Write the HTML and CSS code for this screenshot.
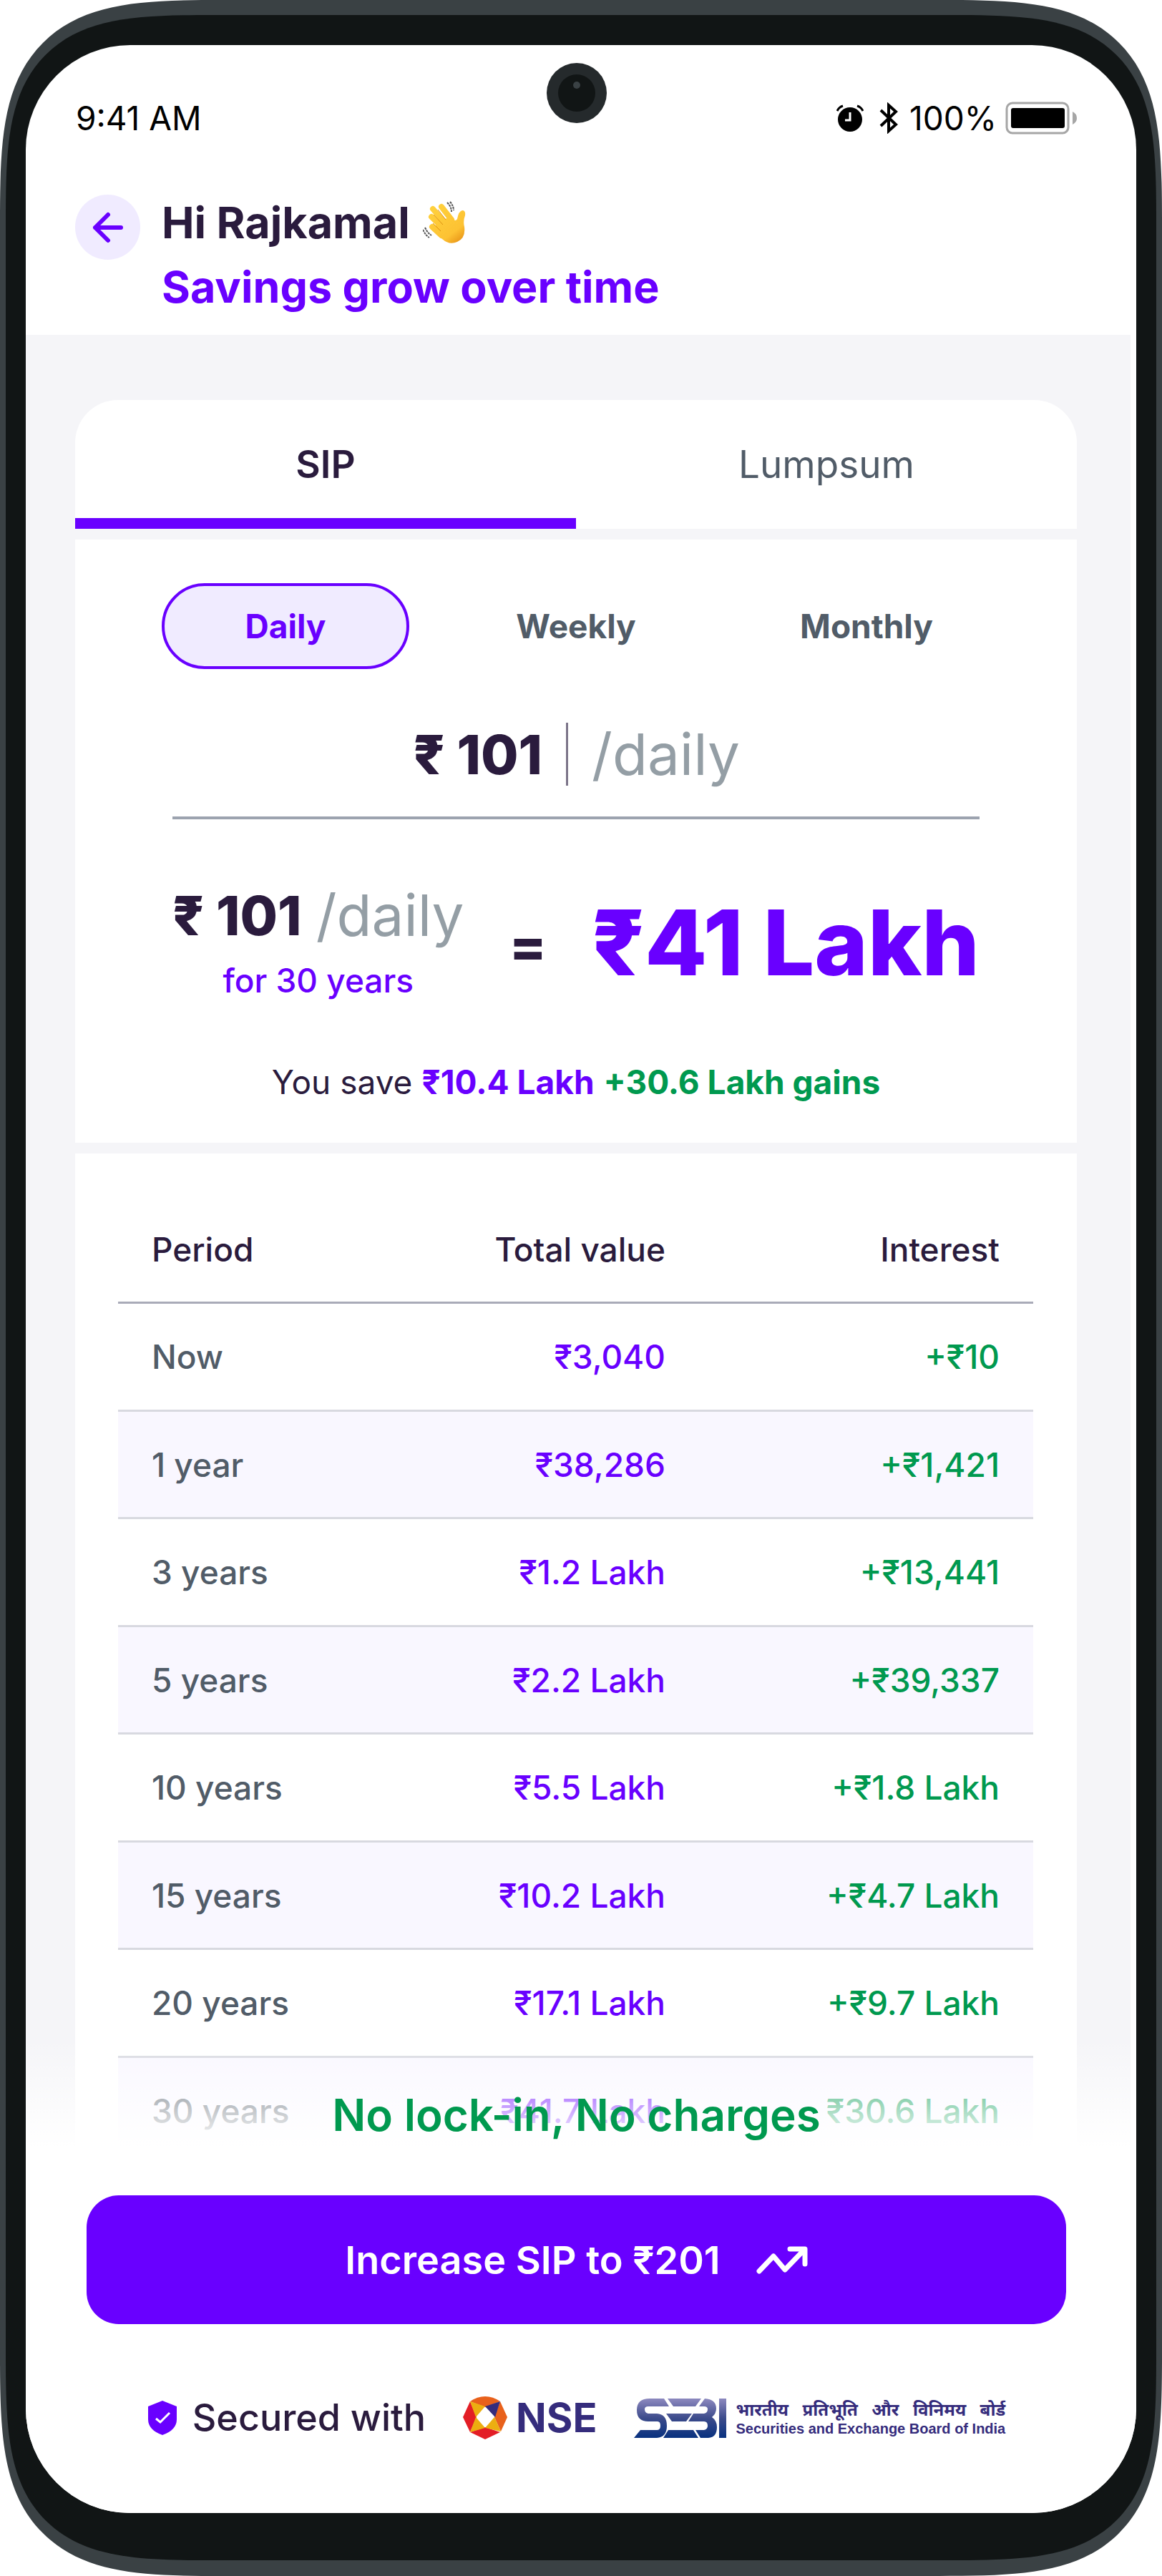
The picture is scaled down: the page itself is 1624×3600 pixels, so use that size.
FILE: index.html
```html
<!DOCTYPE html>
<html lang="en">
<head>
<meta charset="utf-8">
<meta name="viewport" content="width=device-width, initial-scale=1">
<title>Savings grow over time</title>
<link rel="stylesheet" href="styles.css">
</head>
<body>
<div class="phone">
  <div class="bezel">
    <div class="screen">
      <svg class="camera" viewBox="0 0 84 84" aria-hidden="true"><circle cx="42" cy="42" r="42" fill="#252a2c"/><circle cx="42" cy="42" r="26" fill="#111515"/><circle cx="42" cy="31" r="5" fill="#3a4144"/></svg>

      <div class="status">
        <span>9:41 AM</span>
        <div class="status-icons">
          <svg width="38" height="38" viewBox="0 0 38 38" aria-hidden="true"><circle cx="19" cy="21" r="17"/><path d="M1 9a13 13 0 0 1 8-7M29 2a13 13 0 0 1 8 7" fill="none" stroke="#000" stroke-width="3"/><path d="M19 11v11h-7" fill="none" stroke="#fff" stroke-width="3"/></svg>
          <svg class="bluetooth" width="26" height="44" viewBox="0 0 26 44" aria-hidden="true"><path d="M2 11l21 20-10 9V4l10 9L2 33" fill="none" stroke="#000" stroke-width="4"/></svg>
          <span>100%</span>
          <svg class="battery" width="100" height="46" viewBox="0 0 100 46" aria-hidden="true"><rect x="2" y="2" width="86" height="42" rx="8" fill="none" stroke="#a6a6a6" stroke-width="3"/><rect x="8" y="9" width="75" height="28" rx="3"/><path d="M94 14q6 3 6 9t-6 9z" fill="#a6a6a6"/></svg>
        </div>
      </div>

      <header class="header">
        <button class="back" type="button" aria-label="Back">
          <svg width="44" height="44" viewBox="0 0 44 44" aria-hidden="true"><path d="M40 22H4M22 4L4 22l18 18" fill="none" stroke="#6900ff" stroke-width="6" stroke-linecap="round" stroke-linejoin="round"/></svg>
        </button>
        <h1 class="title">
          <span class="greeting">Hi Rajkamal
            <svg class="wave" width="60" height="60" viewBox="0 0 60 60" aria-hidden="true">
              <defs><linearGradient id="skin" gradientUnits="userSpaceOnUse" x1="10" y1="5" x2="52" y2="58"><stop offset="0" stop-color="#ffd23d"/><stop offset=".75" stop-color="#fdc233"/><stop offset="1" stop-color="#e89417"/></linearGradient></defs>
              <g stroke="url(#skin)" stroke-width="8" stroke-linecap="round" fill="none"><path d="M14 11l18 21M26 8l14 18M12 22l18 18M13 36l13 12"/></g>
              <path d="M20 30L38 22Q45 30 48 25Q50 14 55 13Q60 13 59 20Q56 28 58 36Q60 52 48 57Q37 62 27 53L15 41Z" fill="url(#skin)"/>
              <path d="M21 12l11 14M15 19l13 14M14 31l11 11" fill="none" stroke="#dd9012" stroke-width="1"/>
              <path d="M34 2q6 6 6 13M38 1q5 6 5 12M0 40q4 8 9 11M3 37q3 7 9 11" fill="none" stroke="#555" stroke-width="2" stroke-dasharray="3 1"/>
            </svg>
          </span>
          <span class="headline">Savings grow over time</span>
        </h1>
      </header>

      <main class="main">
        <div class="tabs" role="tablist">
          <button class="tab tab-active" type="button" role="tab" aria-selected="true">SIP</button>
          <button class="tab" type="button" role="tab" aria-selected="false">Lumpsum</button>
        </div>

        <section class="panel plan">
          <div class="frequency">
            <button class="pill pill-active" type="button" aria-pressed="true">Daily</button>
            <button class="pill" type="button" aria-pressed="false">Weekly</button>
            <button class="pill" type="button" aria-pressed="false">Monthly</button>
          </div>
          <div class="entry">
            <input class="amount-input" type="text" value="₹ 101" aria-label="Amount">
            <span class="caret"></span>
            <span class="per">/daily</span>
          </div>
          <div class="result">
            <div class="invest">
              <div class="invest-amount"><b>₹ 101</b><span class="per">/daily</span></div>
              <div class="duration">for 30 years</div>
            </div>
            <span class="equals">=</span>
            <strong class="total">₹41 Lakh</strong>
          </div>
          <p class="summary">You save <b class="value">₹10.4 Lakh</b> <b class="gain">+30.6 Lakh gains</b></p>
        </section>

        <section class="panel growth">
          <table class="table">
            <thead><tr><th scope="col">Period</th><th scope="col">Total value</th><th scope="col">Interest</th></tr></thead>
            <tbody>
              <tr><td>Now</td><td>₹3,040</td><td>+₹10</td></tr>
              <tr><td>1 year</td><td>₹38,286</td><td>+₹1,421</td></tr>
              <tr><td>3 years</td><td>₹1.2 Lakh</td><td>+₹13,441</td></tr>
              <tr><td>5 years</td><td>₹2.2 Lakh</td><td>+₹39,337</td></tr>
              <tr><td>10 years</td><td>₹5.5 Lakh</td><td>+₹1.8 Lakh</td></tr>
              <tr><td>15 years</td><td>₹10.2 Lakh</td><td>+₹4.7 Lakh</td></tr>
              <tr><td>20 years</td><td>₹17.1 Lakh</td><td>+₹9.7 Lakh</td></tr>
              <tr><td>30 years</td><td>₹41.7 Lakh</td><td>₹30.6 Lakh</td></tr>
            </tbody>
          </table>
        </section>
      </main>

      <footer class="footer">
        <p class="promise">No lock-in, No charges</p>
        <button class="cta" type="button">
          Increase SIP to ₹201
          <svg width="72" height="44" viewBox="0 0 72 44" aria-hidden="true"><path d="M4 38L24 17l16 19L67 8M47 7h21v21" fill="none" stroke="#fff" stroke-width="7" stroke-linecap="round" stroke-linejoin="round"/></svg>
        </button>
        <div class="secured">
          <div class="secured-label">
            <svg width="42" height="48" viewBox="0 0 42 48" aria-hidden="true"><path d="M21 0l20 8v18q0 15-20 22Q1 41 1 26V8z" fill="#6900ff"/><path d="M12 25l6 5 13-13" fill="none" stroke="#fff" stroke-width="3"/></svg>
            <span>Secured with</span>
          </div>
          <div class="nse">
            <svg width="62" height="60" viewBox="0 0 62 60" aria-hidden="true"><path d="M31 0Q42 0 52 7L31 15 10 7Q20 0 31 0z" fill="#e8611c"/><path d="M52 7l10 22-9 20-9-20z" fill="#e8611c"/><path d="M10 7l9 22-9 21L0 29z" fill="#e31e26"/><path d="M10 50l21-7 21 7-21 10z" fill="#e31e26"/><path d="M10 7l21 7-13 15zM18 29l13 15-21 6zM31 44l13-15 9 20z" fill="#ecae10"/><path d="M52 7L31 14l14 15z" fill="#352c7c"/></svg>
            <span>NSE</span>
          </div>
          <div class="sebi">
            <svg width="130" height="55" viewBox="0 0 130 55" role="img" aria-label="SEBI"><defs><linearGradient id="steel" x1="0" y1="0" x2="0" y2="55" gradientUnits="userSpaceOnUse"><stop offset="0" stop-color="#8d89bf"/><stop offset=".5" stop-color="#3c4b8b"/><stop offset="1" stop-color="#08317f"/></linearGradient></defs><g fill="url(#steel)"><path d="M42 0H22Q4 0 4 16Q4 32 20 32H33Q37 32 37 38Q37 44 32 44H9L0 55H32Q46 54 46 38Q46 22 32 21H20Q15 20 15 15Q15 11 20 11H49z"/><path d="M47 0H94L86 11H55zM45 21H81L73 32H53zM48 44H83L90 55H41z"/><path d="M99 0Q115 1 115 14Q115 21 109 26Q116 31 116 40Q116 54 104 55H93L86 44H98Q103 43 103 38Q103 32 98 32H76L83 21H98Q103 20 103 15Q103 11 98 11H91zM119 0H129V55H119z"/></g></svg>
            <div class="sebi-name">
              <div class="sebi-hindi" lang="hi"><span>भारतीय</span> <span>प्रतिभूति</span> <span>और</span> <span>विनिमय</span> <span>बोर्ड</span></div>
              <div class="sebi-english">Securities and Exchange Board of India</div>
            </div>
          </div>
        </div>
      </footer>
    </div>
  </div>
</div>
</body>
</html>
```
FILE: styles.css
```css
* { box-sizing: border-box; }

body {
  margin: 0;
  background: #fff;
  color: #2a1b3d;
  font-family: Inter, "Noto Sans", sans-serif;
}

button, input { font: inherit; color: inherit; border: 0; background: none; padding: 0; margin: 0; }
h1, p { margin: 0; }
svg { flex: none; display: block; }

/* Device frame */
.phone {
  background: #3a4144;
  border-radius: 205px;
  padding: 21px 8px 22px;
}
.bezel {
  background: #111515;
  border-radius: 185px;
  padding: 42px 28px 66px;
}
@supports (corner-shape: superellipse(1.7)) {
  .phone { border-radius: 312px; corner-shape: superellipse(1.7); }
  .bezel { border-radius: 290px; corner-shape: superellipse(1.7); }
}
.screen {
  position: relative;
  overflow: hidden;
  background: #fff;
  border-radius: 146px;
}
.camera {
  position: absolute;
  top: 25px;
  left: calc(50% - 48px);
  width: 84px;
}

/* Status bar */
.status {
  display: flex;
  justify-content: space-between;
  align-items: center;
  padding: 72px 83px 0 70px;
  color: #000;
  font-size: 46px;
  line-height: 60px;
}
.status-icons { display: flex; align-items: center; }
.bluetooth { margin: 0 16px 0 22px; }
.battery { margin-left: 12px; }

/* Header */
.header {
  display: flex;
  gap: 30px;
  padding: 71px 83px 22px 69px;
}
.back {
  flex: none;
  display: grid;
  place-items: center;
  width: 91px;
  height: 91px;
  margin-top: 6px;
  border-radius: 50%;
  background: #f0ebff;
}
.title { font-size: 61px; line-height: 90px; font-weight: 700; }
.greeting { display: flex; align-items: center; gap: 18px; }
.headline { display: block; color: #6900ff; }

/* Content */
.main {
  margin-right: 8px;
  padding: 91px 75px 0 69px;
  background: #f5f5f8;
}
.tabs {
  display: flex;
  height: 180px;
  margin-bottom: 15px;
  border-radius: 60px 60px 0 0;
  overflow: hidden;
  background: #fff;
}
.tab {
  flex: 1;
  padding-top: 14px;
  border-bottom: 15px solid transparent;
  color: #515c68;
  font-size: 53px;
}
.tab-active { border-color: #6900ff; color: #2a1b3d; font-weight: 600; }
.panel { background: #fff; }
.plan { margin-bottom: 15px; padding: 61px 121px 55px; }
.frequency { display: flex; gap: 60px; }
.pill {
  flex: 1;
  height: 120px;
  border: 4px solid transparent;
  border-radius: 60px;
  color: #515c68;
  font-size: 46px;
  font-weight: 700;
}
.pill-active { border-color: #6900ff; background: #f0ebff; color: #6900ff; }
.entry {
  display: flex;
  justify-content: center;
  margin: 75px 15px 0;
  padding-bottom: 43px;
  border-bottom: 4px solid #9ca3af;
  font-size: 76px;
  line-height: 88px;
}
.amount-input { width: 182px; height: 88px; font-weight: 800; text-align: right; }
.caret { width: 3px; height: 88px; margin: 0 33px; background: #7c7589; }
.per { color: #949ea5; font-size: 80px; font-weight: 400; }
.result {
  display: flex;
  align-items: center;
  justify-content: space-between;
  margin: 89px 15px 0;
}
.invest { text-align: center; }
.invest-amount { display: flex; gap: 20px; font-size: 76px; line-height: 90px; }
.invest-amount b { font-weight: 800; }
.duration { margin-top: 16px; color: #6900ff; font-size: 46px; line-height: 60px; font-weight: 500; }
.equals { padding-top: 8px; font-size: 76px; line-height: 90px; font-weight: 800; }
.total { color: #6900ff; font-size: 127px; line-height: 120px; font-weight: 800; }
.summary { margin-top: 82px; text-align: center; font-size: 46px; line-height: 60px; }
.value { color: #6900ff; }
.gain { color: #00994f; }

/* Growth table */
.growth { padding: 56px 61px 0 60px; }
.table {
  width: 100%;
  table-layout: fixed;
  border-collapse: separate;
  border-spacing: 0;
  font-size: 46px;
  line-height: 60px;
  font-weight: 500;
}
.table th, .table td { padding: 0 47px; text-align: right; white-space: nowrap; }
.table th { height: 154px; padding-top: 4px; border-bottom: 3px solid #a9abb8; font-weight: 500; }
.table th:first-child { width: 30%; }
.table th:last-child { width: 467px; }
.table th:first-child, .table td:first-child { text-align: left; }
.table td { height: 151px; border-bottom: 3px solid #d8d9e0; color: #00994f; }
.table td:first-child { color: #515c68; }
.table td:nth-child(2) { color: #6900ff; }
.table tr:nth-child(even) td { height: 150px; background: #f9f7ff; }
.table tr:last-child td { border-color: transparent; }

/* Footer fades over the last table row */
.footer {
  position: relative;
  margin-top: -176px;
  padding: 66px 98px 102px 85px;
  background: linear-gradient(rgba(255, 255, 255, 0), #fff 150px);
}
.promise { color: #00994f; font-size: 62px; line-height: 80px; font-weight: 600; text-align: center; }
.cta {
  display: flex;
  align-items: center;
  justify-content: center;
  gap: 50px;
  width: 100%;
  height: 180px;
  margin: 72px 0 100px;
  border-radius: 45px;
  background: #6900ff;
  color: #fff;
  font-size: 54px;
  font-weight: 600;
}
.secured { display: flex; align-items: center; justify-content: center; gap: 52px; font-size: 52px; line-height: 62px; font-weight: 500; }
.secured-label { display: flex; align-items: center; gap: 21px; }
.nse { display: flex; align-items: center; gap: 12px; color: #352c7c; font-size: 56px; font-weight: 700; }
.sebi { display: flex; align-items: center; gap: 12px; color: #352c7c; font-weight: 700; }
.sebi-hindi { display: flex; justify-content: space-between; font-family: "Noto Sans", sans-serif; font-size: 24px; line-height: 30px; }
.sebi-english { font-family: "Liberation Sans", sans-serif; font-size: 20px; line-height: 24px; }
```
